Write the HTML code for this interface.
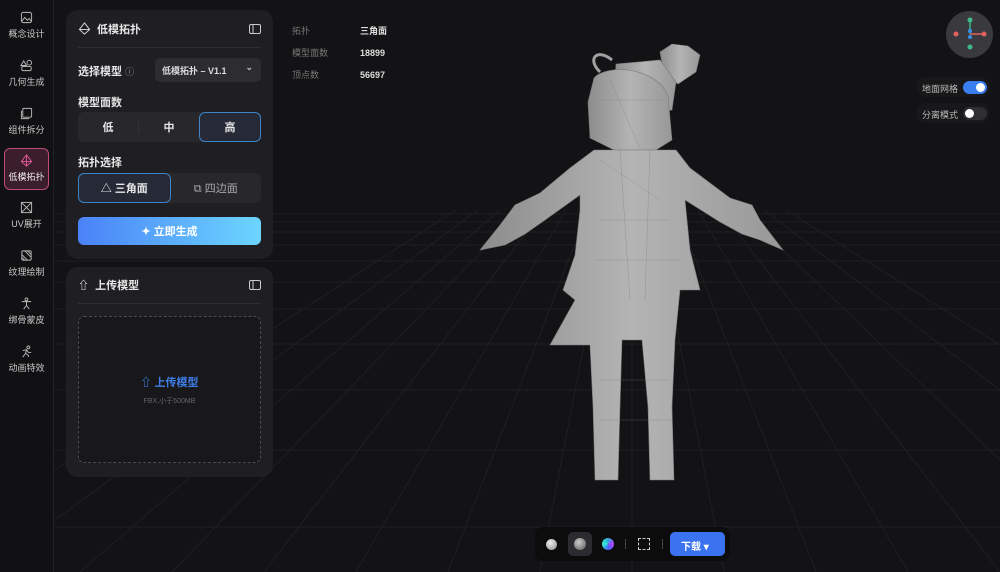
<!DOCTYPE html>
<html><head><meta charset="utf-8"><style>
*{box-sizing:border-box;margin:0;padding:0}
body{width:1000px;height:572px;background:#131315;font-family:"Liberation Sans","Noto Sans CJK SC",sans-serif;color:#e6e6e6;position:relative;overflow:hidden}
.side{position:absolute;left:0;top:0;width:54px;height:572px;background:#111113;border-right:1px solid #222226}
.si{position:absolute;left:4px;width:45px;height:42px;text-align:center;font-size:9px;color:#c8c8c8}
.si svg{display:block;margin:5px auto 3px;}
.si.act{border:1px solid #c0497e;background:#3a1e2c;border-radius:6px}
.panel{position:absolute;left:66px;width:207px;background:#1f1f23;border-radius:12px}
.ph{height:38px;display:flex;align-items:center;font-size:11px;font-weight:bold;border-bottom:1px solid #2e2e33;margin:0 12px;padding:0}
.lbl{position:absolute;left:12px;font-size:11px;font-weight:bold;color:#e6e6e6}
.seg{position:absolute;left:12px;width:183px;height:30px;background:#27272c;border-radius:6px;display:flex;font-size:11px;font-weight:bold}
.seg div{flex:1;display:flex;align-items:center;justify-content:center}
.on{border:1px solid #3d84c6;background:#252a36;border-radius:6px}
</style></head><body>
<svg style="position:absolute;left:0;top:0" width="1000" height="572">
<g stroke="#1f1f24" stroke-width="1">
<line x1="55" y1="214" x2="1000" y2="214"/><line x1="55" y1="222" x2="1000" y2="222"/><line x1="55" y1="232" x2="1000" y2="232"/><line x1="55" y1="245" x2="1000" y2="245"/><line x1="55" y1="261" x2="1000" y2="261"/><line x1="55" y1="282" x2="1000" y2="282"/><line x1="55" y1="309" x2="1000" y2="309"/><line x1="55" y1="344" x2="1000" y2="344"/><line x1="55" y1="390" x2="1000" y2="390"/><line x1="55" y1="450" x2="1000" y2="450"/><line x1="55" y1="527" x2="1000" y2="527"/>
<line x1="632" y1="210" x2="632" y2="572"/><line x1="610" y1="210" x2="540" y2="572"/><line x1="654" y1="210" x2="724" y2="572"/><line x1="588" y1="210" x2="448" y2="572"/><line x1="676" y1="210" x2="816" y2="572"/><line x1="566" y1="210" x2="356" y2="572"/><line x1="698" y1="210" x2="908" y2="572"/><line x1="544" y1="210" x2="264" y2="572"/><line x1="720" y1="210" x2="1000" y2="572"/><line x1="522" y1="210" x2="172" y2="572"/><line x1="742" y1="210" x2="1000" y2="460"/><line x1="500" y1="210" x2="80" y2="572"/><line x1="764" y1="210" x2="1000" y2="390"/><line x1="478" y1="210" x2="55" y2="520"/><line x1="786" y1="210" x2="1000" y2="345"/><line x1="456" y1="210" x2="55" y2="470"/>
</g>
<defs><linearGradient id="g" x1="0" y1="0" x2="1" y2="0"><stop offset="0" stop-color="#8c8c8c"/><stop offset=".5" stop-color="#b4b4b4"/><stop offset="1" stop-color="#989898"/></linearGradient></defs>
<g fill="url(#g)" stroke="#7a7a7a" stroke-width=".6">
<path d="M660 52 L672 44 L688 46 L700 55 L696 72 L678 84 L664 74Z"/>
<path d="M612 60 C598 48 586 58 600 72" fill="none" stroke="#a0a0a0" stroke-width="3"/>
<path d="M616 64 L660 60 L676 82 L672 110 L645 114 L614 98Z"/>
<path d="M594 78 C606 64 656 66 668 96 L672 140 L656 150 L614 150 L590 138 L588 102Z"/>
<path d="M594 150 L676 150 L690 168 L730 198 L752 205 L760 220 L783 250 L760 240 L742 234 L720 222 L685 200 L690 250 L700 290 L680 290 L675 340 L672 407 L674 480 L650 480 L648 407 L642 340 L622 340 L620 407 L618 480 L595 480 L593 407 L590 345 L550 345 L575 300 L563 290 L575 255 L580 210 L580 195 L545 220 L525 234 L505 245 L480 250 L500 225 L515 205 L540 193 L570 168Z"/>
</g>
<g stroke="#7e7e7e" stroke-width=".4" fill="none" opacity=".7">
<path d="M600 160 L660 200 M600 220 L670 220 M595 260 L680 260 M620 150 L630 300 M650 150 L645 300 M600 380 L670 380 M600 420 L672 420 M597 100 L665 100 M610 80 L640 148"/>
</g>
</svg>

<div class="side">
<div class="si" style="top:6px"><svg width="13" height="13" viewBox="0 0 14 14" fill="none" stroke="#bbb"><rect x="1.5" y="1.5" width="11" height="11" rx="2"/><path d="M2 11l3-4 3 3 2-2 2 3"/></svg>概念设计</div>
<div class="si" style="top:54px"><svg width="13" height="13" viewBox="0 0 14 14" fill="none" stroke="#bbb"><path d="M4 2l3 5H1z"/><circle cx="10" cy="4" r="2.5"/><rect x="2" y="8" width="10" height="4.5" rx="1"/></svg>几何生成</div>
<div class="si" style="top:102px"><svg width="13" height="13" viewBox="0 0 14 14" fill="none" stroke="#bbb"><rect x="3" y="1.5" width="9.5" height="9.5" rx="1"/><path d="M1.5 4v8.5H10"/></svg>组件拆分</div>
<div class="si act" style="top:148px;height:42px"><svg width="13" height="13" viewBox="0 0 14 14" fill="none" stroke="#e35a99"><path d="M7 1L1.5 8 7 13 12.5 8z M1.5 8h11 M7 1v12"/></svg><span style="color:#eee">低模拓扑</span></div>
<div class="si" style="top:196px"><svg width="13" height="13" viewBox="0 0 14 14" fill="none" stroke="#bbb"><rect x="1.5" y="1.5" width="11" height="11"/><path d="M1.5 1.5l11 11M12.5 1.5l-11 11"/></svg>UV展开</div>
<div class="si" style="top:244px"><svg width="13" height="13" viewBox="0 0 14 14" fill="none" stroke="#bbb"><rect x="2" y="2" width="10" height="10" rx="1"/><path d="M2 6l6 6M2 9l3 3M5 2l7 7M8 2l4 4"/></svg>纹理绘制</div>
<div class="si" style="top:292px"><svg width="13" height="13" viewBox="0 0 14 14" fill="none" stroke="#bbb"><circle cx="7" cy="2.5" r="1.5"/><path d="M2 5h10M7 5v4l-3 4M7 9l3 4"/></svg>绑骨蒙皮</div>
<div class="si" style="top:340px"><svg width="13" height="13" viewBox="0 0 14 14" fill="none" stroke="#bbb"><circle cx="9" cy="2.5" r="1.5"/><path d="M3 6l4-1 2 3 3 0M7 5l-1 4-3 4M6 9l3 2 0 2"/></svg>动画特效</div>
</div>

<div class="panel" style="top:10px;height:249px">
<div class="ph"><svg width="13" height="13" viewBox="0 0 14 14" fill="none" stroke="#ddd" style="margin-right:6px"><path d="M7 1L1.5 8 7 13 12.5 8z M1.5 8h11"/></svg>低模拓扑<svg style="margin-left:auto" width="12" height="10" viewBox="0 0 12 10" fill="none" stroke="#ccc"><rect x=".5" y=".5" width="11" height="9" rx="1.5"/><path d="M4 .5v9"/></svg></div>
<div class="lbl" style="top:53px">选择模型 <span style="font-weight:normal;color:#999;font-size:9px">ⓘ</span></div>
<div style="position:absolute;left:89px;top:48px;width:106px;height:24px;background:#2c2c31;border-radius:5px;font-size:9px;font-weight:bold;padding:6px 7px;color:#ddd">低模拓扑 – V1.1<span style="position:absolute;right:8px;top:4px;color:#bbb">⌄</span></div>
<div class="lbl" style="top:84px">模型面数</div>
<div class="seg" style="top:102px"><div>低</div><div style="border-left:1px solid #333;height:12px;flex:0 0 1px;margin-top:9px"></div><div>中</div><div class="on">高</div></div>
<div class="lbl" style="top:144px">拓扑选择</div>
<div class="seg" style="top:163px"><div class="on">△ 三角面</div><div style="color:#aaa;font-weight:normal">⧉ 四边面</div></div>
<div style="position:absolute;left:12px;top:207px;width:183px;height:28px;border-radius:6px;background:linear-gradient(90deg,#4a82f7,#6cd6ff);display:flex;align-items:center;justify-content:center;font-size:11px;font-weight:bold;color:#fff">✦ 立即生成</div>
</div>

<div class="panel" style="top:267px;height:210px">
<div class="ph" style="height:37px">⇧&nbsp; 上传模型<svg style="margin-left:auto" width="12" height="10" viewBox="0 0 12 10" fill="none" stroke="#ccc"><rect x=".5" y=".5" width="11" height="9" rx="1.5"/><path d="M4 .5v9"/></svg></div>
<div style="position:absolute;left:12px;top:49px;width:183px;height:147px;border:1px dashed #4a4a50;border-radius:6px;background:#18181b;text-align:center">
<div style="margin-top:57px;font-size:11px;font-weight:bold;color:#3f7de8">⇧ 上传模型</div>
<div style="margin-top:6px;font-size:7px;color:#666">FBX,小于500MB</div></div>
</div>

<div style="position:absolute;left:292px;top:20px;font-size:9px;color:#777;line-height:22px">拓扑<br>模型面数<br>顶点数</div>
<div style="position:absolute;left:360px;top:20px;font-size:9px;color:#ddd;line-height:22px;font-weight:bold">三角面<br>18899<br>56697</div>

<div style="position:absolute;left:946px;top:11px;width:47px;height:47px;border-radius:50%;background:#3a3a3e"></div>
<svg style="position:absolute;left:946px;top:11px" width="47" height="47"><line x1="24" y1="9" x2="24" y2="23" stroke="#3fb889" stroke-width="1.5"/><line x1="24" y1="23" x2="38" y2="23" stroke="#e26060" stroke-width="1.5"/><circle cx="24" cy="9" r="2.5" fill="#3fb889"/><circle cx="24" cy="36" r="2.5" fill="#3fb889"/><circle cx="10" cy="23" r="2.5" fill="#e26060"/><circle cx="38" cy="23" r="2.5" fill="#e26060"/><circle cx="24" cy="20" r="2" fill="#3a8ee8"/><circle cx="24" cy="26" r="2" fill="#3a8ee8"/></svg>
<div style="position:absolute;left:916px;top:77px;width:74px;height:20px;border-radius:10px;background:#18181a;font-size:9px;color:#bbb;padding:5px 6px">地面网格<span style="position:absolute;right:3px;top:4px;width:24px;height:13px;border-radius:7px;background:#3a7ef0"><span style="position:absolute;right:2px;top:2px;width:9px;height:9px;border-radius:50%;background:#fff"></span></span></div>
<div style="position:absolute;left:916px;top:103px;width:74px;height:20px;border-radius:10px;background:#18181a;font-size:9px;color:#bbb;padding:5px 6px">分离模式<span style="position:absolute;right:3px;top:4px;width:24px;height:13px;border-radius:7px;background:#2e2e33"><span style="position:absolute;left:2px;top:2px;width:9px;height:9px;border-radius:50%;background:#fff"></span></span></div>

<div style="position:absolute;left:535px;top:527px;width:195px;height:34px;border-radius:8px;background:#0c0c0d">
<span style="position:absolute;left:11px;top:12px;width:11px;height:11px;border-radius:50%;background:radial-gradient(circle at 40% 35%,#eee,#888)"></span>
<span style="position:absolute;left:33px;top:5px;width:24px;height:24px;border-radius:5px;background:#2c2c30"></span>
<span style="position:absolute;left:39px;top:11px;width:12px;height:12px;border-radius:50%;background:radial-gradient(circle at 40% 35%,#ccc,#555)"></span>
<span style="position:absolute;left:67px;top:11px;width:12px;height:12px;border-radius:50%;background:conic-gradient(#3ad,#a4f,#46f,#3ec,#3ad)"></span>
<span style="position:absolute;left:90px;top:12px;width:1px;height:10px;background:#444"></span>
<span style="position:absolute;left:103px;top:11px;width:12px;height:12px;border:1px dashed #ccc"></span>
<span style="position:absolute;left:127px;top:12px;width:1px;height:10px;background:#444"></span>
<span style="position:absolute;left:135px;top:5px;width:55px;height:24px;border-radius:5px;background:#3a72f0;color:#fff;font-size:10px;font-weight:bold;padding:6px 0 0 11px">下载 ▾</span>
</div>
</body></html>
